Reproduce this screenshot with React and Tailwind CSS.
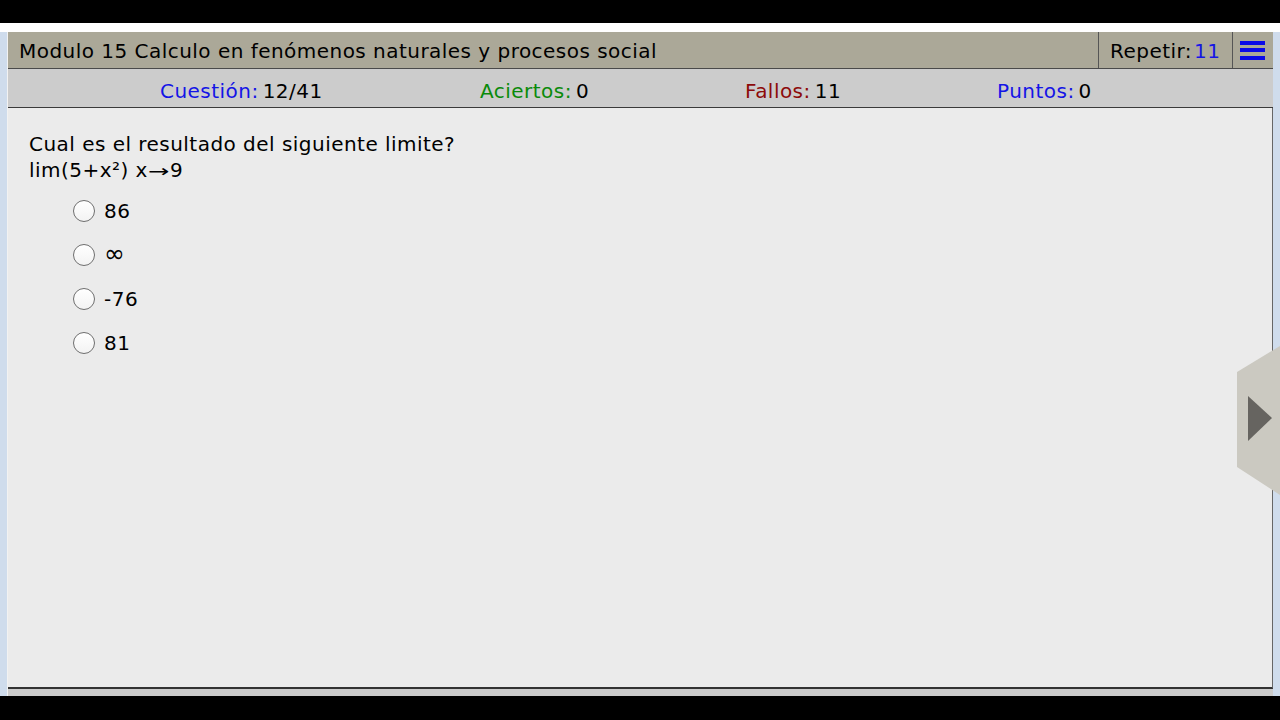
import React from "react";

const font = { fontFamily: '"DejaVu Sans", Verdana, sans-serif' };

function Stat({ label, value, color, width }) {
  return (
    <div className={`flex items-center gap-[4px] ${width}`}>
      <span className={color}>{label}</span>
      <span className="text-black">{value}</span>
    </div>
  );
}

function Option({ children }) {
  return (
    <div className="flex items-center h-[44px] pl-[65px]">
      <div className="w-[22px] h-[22px] rounded-full border-[1.5px] border-[#6f6f6f] bg-gradient-to-b from-[#ffffff] to-[#f3f3f3]" />
      <span className="ml-[9px]">{children}</span>
    </div>
  );
}

export default function App() {
  return (
    <div className="w-[1280px] h-[720px] bg-black flex flex-col text-[20px] tracking-[0.47px] text-black" style={font}>
      <div className="h-[23px] bg-black" />
      <div className="h-[9px] bg-white" />
      <div className="flex-1 flex bg-[#cfdcec] relative">
        <div className="w-[7px]" />
        <div className="flex-1 flex flex-col border-l border-[#f2f2f2]">
          <div className="h-[37px] bg-[#aba898] border-b border-[#4a4a4a] flex items-stretch">
            <div className="flex-1 flex items-center pl-[11px] pt-[2px] leading-none">
              Modulo 15 Calculo en fenómenos naturales y procesos social
            </div>
            <div className="w-[134px] border-l border-[#555] flex items-center pl-[11px] pt-[2px] gap-[2px] leading-none">
              <span>Repetir:</span>
              <span className="text-[#1515e6]">11</span>
            </div>
            <div className="w-[41px] border-l border-[#555] flex flex-col justify-center pl-[7px] gap-[3.5px]">
              <div className="w-[25px] h-[4px] bg-[#0a0ae8]" />
              <div className="w-[25px] h-[4px] bg-[#0a0ae8]" />
              <div className="w-[25px] h-[4px] bg-[#0a0ae8]" />
            </div>
          </div>
          <div className="h-[39px] bg-[#cccccc] border-b border-[#3a3a3a] flex items-center pl-[152px] pt-[5px] leading-none">
            <Stat label="Cuestión:" value="12/41" color="text-[#1414e6]" width="w-[320px]" />
            <Stat label="Aciertos:" value="0" color="text-[#0a8a0a]" width="w-[265px]" />
            <Stat label="Fallos:" value="11" color="text-[#8c0a0a]" width="w-[252px]" />
            <Stat label="Puntos:" value="0" color="text-[#1414e6]" width="w-[120px]" />
          </div>
          <div className="flex-1 bg-[#ebebeb] border-b-2 border-[#333] border-r border-r-[#666] pt-[23px]">
            <div className="pl-[21px] leading-[26px]">
              <div>Cual es el resultado del siguiente limite?</div>
              <div className="h-[26px]">
                lim(5+x²) x
                <span className="inline-block w-[22px] text-center scale-x-[1.5] text-[17px] leading-none">→</span>
                9
              </div>
            </div>
            <div className="mt-[6px]">
              <Option>86</Option>
              <Option>
                <span className="text-[25px] leading-none">∞</span>
              </Option>
              <Option>-76</Option>
              <Option>81</Option>
            </div>
          </div>
          <div className="h-[7px] bg-[#cccccc]" />
        </div>
        <div className="w-[7px]" />
        <svg
          className="absolute left-[1237px] top-[313px]"
          width="43"
          height="150"
          viewBox="0 0 43 150"
        >
          <polygon points="0,27 43,1 43,150 0,122" fill="#cbc9c1" />
          <polygon points="11,51 35,73 11,96" fill="#666460" />
        </svg>
      </div>
      <div className="h-[24px] bg-black" />
    </div>
  );
}
